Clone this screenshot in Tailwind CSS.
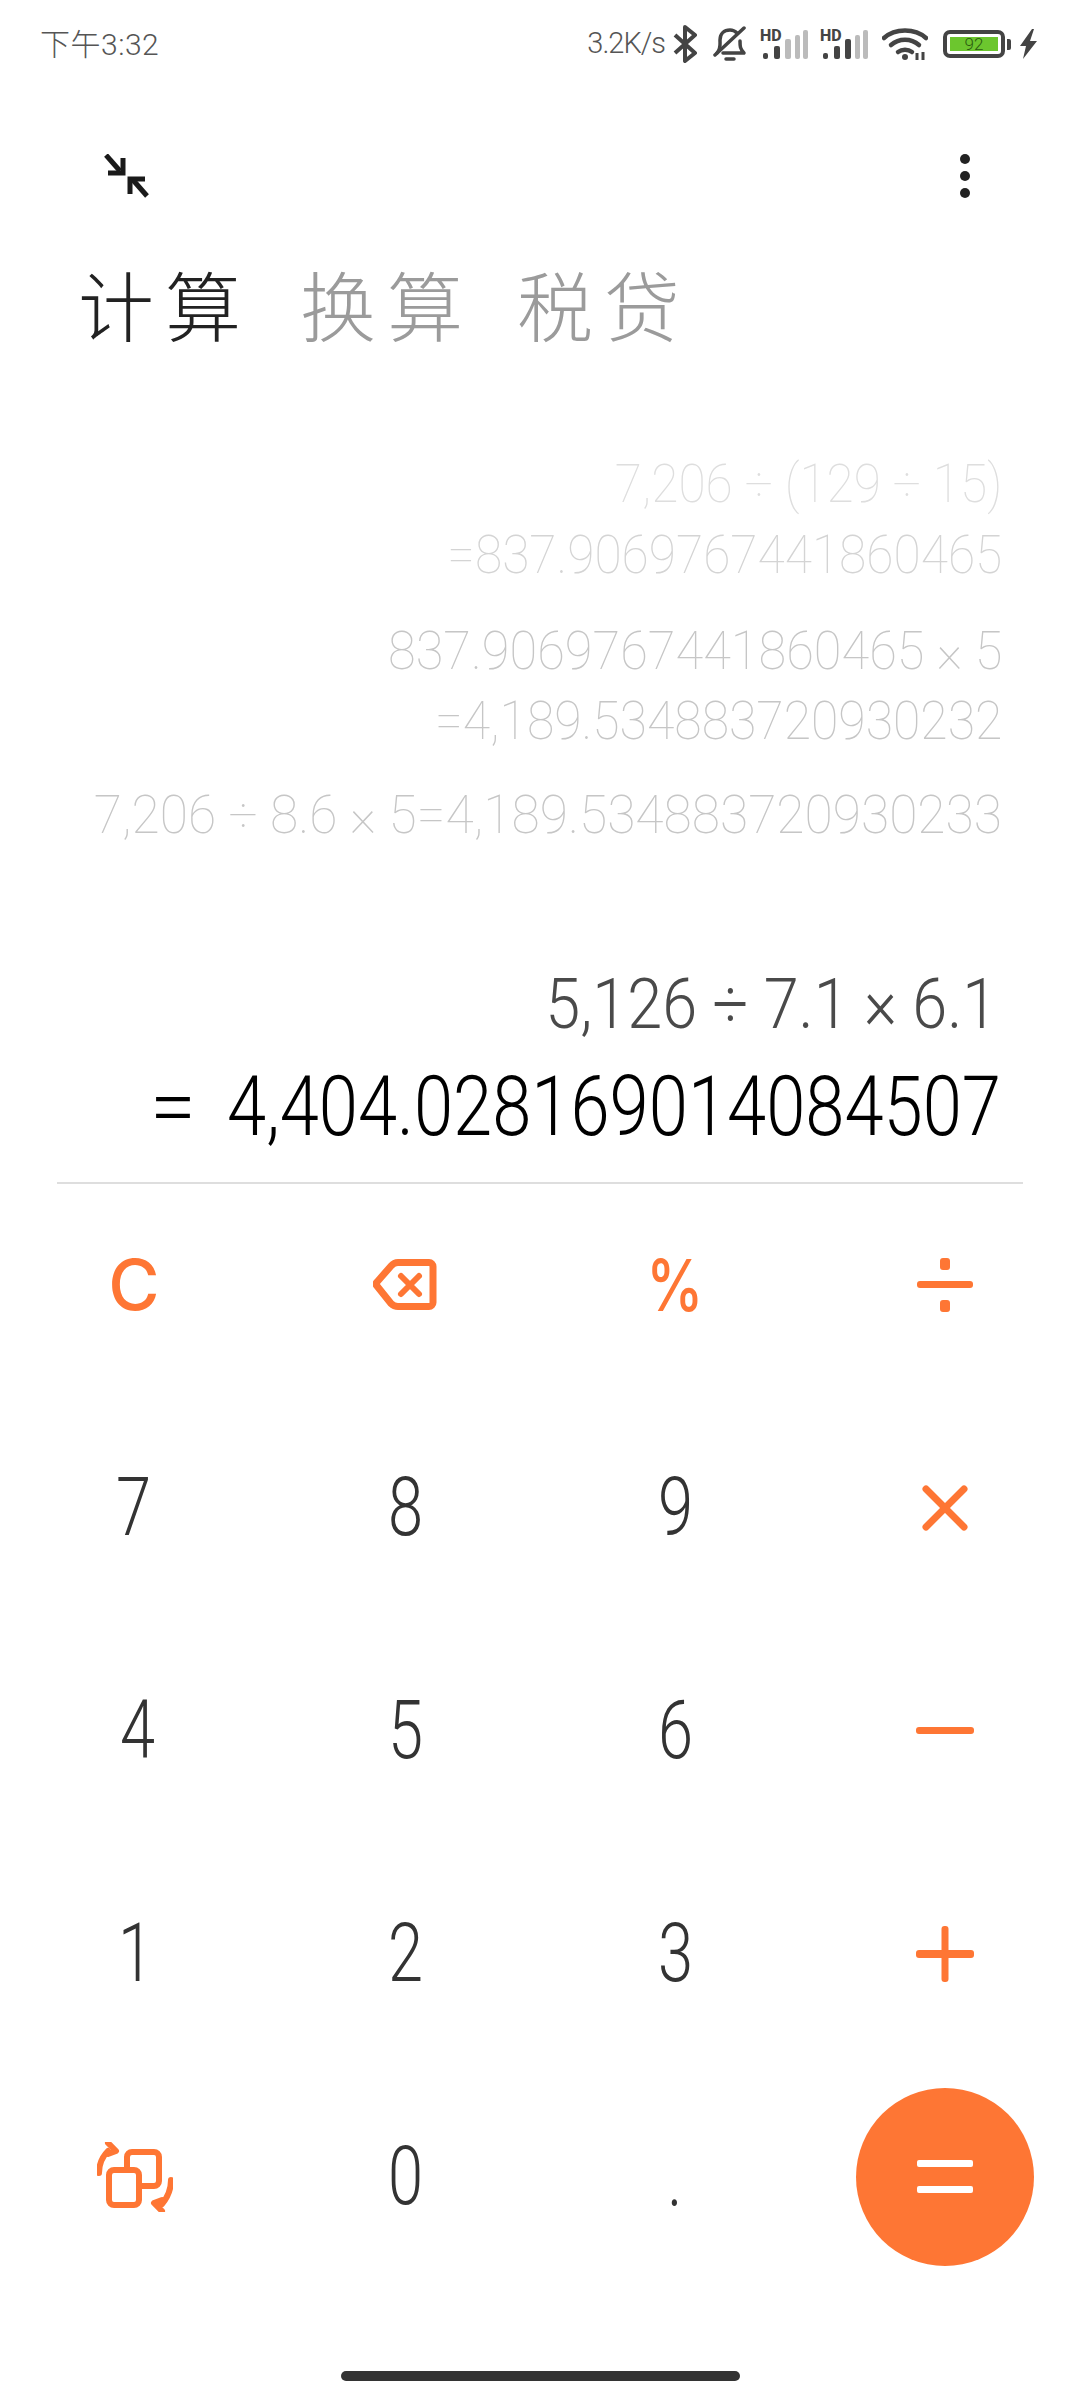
<!DOCTYPE html>
<html lang="zh">
<head>
<meta charset="utf-8">
<script src="https://cdn.jsdelivr.net/npm/@tailwindcss/browser@4"></script>
</head>
<body class="bg-white">
<div class="w-[1080px] h-[2400px] overflow-hidden bg-white font-['Roboto','Noto_Sans_CJK_SC',sans-serif]">

  <!-- status bar -->
  <div class="h-[88px] pl-[40px] pr-[43px] flex items-center text-[#555]">
    <span class="text-[30px] font-light font-['Roboto','Noto_Sans_CJK_SC',sans-serif] tracking-[0.5px]">下午3:32</span>
    <span class="ml-auto text-[29px] font-light tracking-[-1px] mr-[8px] inline-block">3.2K/s</span>
    <svg class="w-[25px] h-[38px] mr-[15px]" viewBox="0 0 25 38" fill="none" stroke="#444" stroke-width="4" stroke-linejoin="round"><path d="M2 10l20 18-10 8V2l10 8L2 28"/></svg>
    <svg class="w-[34px] h-[36px] mr-[13px]" viewBox="0 0 34 36" fill="none" stroke="#444" stroke-width="3.5" stroke-linecap="round" stroke-linejoin="round"><path d="M4 27c4-4 3-8 3-13 0-6 4-10 10-10 3 0 5 1 7 3M27 15c0 5 0 8 4 12H10"/><path d="M2 29L31 2"/><path d="M13 33h8"/></svg>
    <div class="relative w-[48px] h-[30px] mr-[12px]">
      <span class="absolute left-0 top-0 text-[16px] leading-[13px] font-extrabold text-[#444]">HD</span>
      <svg class="w-[48px] h-[30px]" viewBox="0 0 48 30"><rect x="3" y="24" width="5" height="6" rx="2" fill="#444"/><rect x="14" y="17" width="6" height="13" rx="2" fill="#444"/><rect x="25" y="10" width="6" height="20" rx="2" fill="#bbb"/><rect x="35" y="6" width="5" height="24" rx="2" fill="#bbb"/><rect x="43" y="1" width="5" height="29" rx="2" fill="#bbb"/></svg>
    </div>
    <div class="relative w-[48px] h-[30px] mr-[14px]">
      <span class="absolute left-0 top-0 text-[16px] leading-[13px] font-extrabold text-[#444]">HD</span>
      <svg class="w-[48px] h-[30px]" viewBox="0 0 48 30"><rect x="3" y="24" width="5" height="6" rx="2" fill="#444"/><rect x="14" y="17" width="6" height="13" rx="2" fill="#444"/><rect x="25" y="10" width="6" height="20" rx="2" fill="#444"/><rect x="35" y="6" width="5" height="24" rx="2" fill="#bbb"/><rect x="43" y="1" width="5" height="29" rx="2" fill="#bbb"/></svg>
    </div>
    <svg class="w-[46px] h-[34px] mr-[15px]" viewBox="0 0 46 34" fill="none" stroke="#444" stroke-width="4.5" stroke-linecap="round"><path d="M2 11c11-10 31-10 42 0"/><path d="M9 18c8-7 20-7 28 0"/><path d="M16 25c4-3 10-3 14 0"/><circle cx="23" cy="30" r="3" fill="#444" stroke="none"/><path d="M35 26v7M41 25v8" stroke-width="3" stroke-linecap="butt"/></svg>
    <div class="w-[69px] h-[28px] flex items-center mr-[8px]">
      <div class="w-[62px] h-[28px] rounded-[7px] border-[4px] border-[#444] p-[3px] flex">
        <div class="w-full bg-[#6cc62e] flex items-center justify-center text-[17px] leading-none text-[#2a5a10] font-light">92</div>
      </div>
      <div class="ml-[2px] w-[4px] h-[11px] rounded-r-[2px] bg-[#444]"></div>
    </div>
    <svg class="w-[17px] h-[30px]" viewBox="0 0 17 30" fill="#444"><path d="M12 0L0 17h6l-3 13 14-18h-7l4-12z"/></svg>
  </div>

  <!-- toolbar -->
  <div class="mt-[44px] h-[88px] pl-[104px] pr-[110px] flex items-center justify-between">
    <svg class="w-[45px] h-[44px]" viewBox="0 0 45 44" fill="none" stroke="#1a1a1a" stroke-width="5"><path d="M2 1l14 16" /><path d="M19 4v15H4" stroke-width="5"/><path d="M43 42L29 26"/><path d="M26 40V25h15"/></svg>
    <svg class="w-[12px] h-[44px] mr-[-1px]" viewBox="0 0 12 44" fill="#222"><circle cx="6" cy="5" r="5"/><circle cx="6" cy="22" r="5"/><circle cx="6" cy="39" r="5"/></svg>
  </div>

  <!-- tabs -->
  <div class="mt-[38px] h-[90px] pl-[78px] flex items-center text-[76px] leading-none font-light font-['Noto_Sans_CJK_SC',sans-serif] tracking-[11px] text-[#9b9b9b]">
    <span class="w-[222px] text-[#222]">计算</span>
    <span class="w-[217px]">换算</span>
    <span>税贷</span>
  </div>

  <!-- history -->
  <div class="mt-[100px] pr-[78px] flex flex-col items-end text-[54px] leading-none font-thin text-[#c6c6c6]">
    <div class="h-[72px] flex items-center text-[#dedede]"><span class="inline-block whitespace-nowrap origin-right scale-x-[.92]">7,206 ÷ (129 ÷ 15)</span></div>
    <div class="h-[70px] flex items-center text-[#d4d4d4]"><span class="inline-block whitespace-nowrap origin-right scale-x-[.92]">=837.9069767441860465</span></div>
    <div class="h-[26px]"></div>
    <div class="h-[70px] flex items-center"><span class="inline-block whitespace-nowrap origin-right scale-x-[.936]">837.9069767441860465 × 5</span></div>
    <div class="h-[70px] flex items-center"><span class="inline-block whitespace-nowrap origin-right scale-x-[.925]">=4,189.534883720930232</span></div>
    <div class="h-[24px]"></div>
    <div class="h-[70px] flex items-center"><span class="inline-block whitespace-nowrap origin-right scale-x-[.954]">7,206 ÷ 8.6 × 5=4,189.534883720930233</span></div>
  </div>

  <!-- current expression -->
  <div class="mt-[119px] pr-[83px] flex flex-col items-end leading-none">
    <div class="h-[70px] flex items-center text-[70px] font-light text-[#4a4a4a]"><span class="inline-block whitespace-nowrap origin-right scale-x-[.9]">5,126 ÷ 7.1 × 6.1</span></div>
    <div class="mt-[27px] h-[80px] flex items-center text-[83px] font-light text-black">
      <span class="mr-[37px] inline-block w-[40px] text-center">=</span><span class="inline-block whitespace-nowrap origin-left scale-x-[.85] w-[770px]">4,404.028169014084507</span>
    </div>
  </div>

  <div class="mt-[36px] mx-[57px] h-[2px] bg-[#dedede]"></div>

  <!-- keypad -->
  <div class="-mt-[11px] grid grid-cols-4 auto-rows-[223px] text-[81px] font-light leading-none text-[#333]">
    <div class="flex items-center justify-center"><span class="text-[70px] font-medium font-['Inter'] text-[#fe7634] ml-[-2px]">C</span></div>
    <div class="flex items-center justify-center">
      <svg class="w-[64px] h-[51px]" viewBox="0 0 64 51" fill="none" stroke="#fe7634" stroke-width="7" stroke-linecap="round" stroke-linejoin="round"><path d="M25 3.500h31a4 4 0 0 1 4 4v36a4 4 0 0 1-4 4H25q-4 0-7-3L4 27q-2-2 0-4L18 7q3-3.500 7-3.500z"/><path d="M28 17l18 18M46 17L28 35" stroke-width="6"/></svg>
    </div>
    <div class="flex items-center justify-center"><span class="text-[72px] font-medium font-['Inter'] text-[#fe7634] inline-block scale-x-[.8]">%</span></div>
    <div class="flex items-center justify-center">
      <svg class="w-[58px] h-[54px]" viewBox="0 0 58 54" fill="#fe7634"><rect x="24" y="0" width="10" height="12" rx="3"/><rect x="1" y="23" width="56" height="7" rx="3"/><rect x="24" y="42" width="10" height="12" rx="3"/></svg>
    </div>

    <div class="flex items-center justify-center"><span class="inline-block scale-x-[.78] mr-[4px]">7</span></div>
    <div class="flex items-center justify-center"><span class="inline-block scale-x-[.78]">8</span></div>
    <div class="flex items-center justify-center"><span class="inline-block scale-x-[.78]">9</span></div>
    <div class="flex items-center justify-center">
      <svg class="w-[46px] h-[46px]" viewBox="0 0 46 46" fill="none" stroke="#fe7634" stroke-width="7" stroke-linecap="round"><path d="M4 4l38 38M42 4L4 42"/></svg>
    </div>

    <div class="flex items-center justify-center"><span class="inline-block scale-x-[.78] mr-[-4px]">4</span></div>
    <div class="flex items-center justify-center"><span class="inline-block scale-x-[.78]">5</span></div>
    <div class="flex items-center justify-center"><span class="inline-block scale-x-[.78]">6</span></div>
    <div class="flex items-center justify-center">
      <svg class="w-[58px] h-[8px]" viewBox="0 0 58 8" fill="#fe7634"><rect x="0" y="0" width="58" height="7" rx="3"/></svg>
    </div>

    <div class="flex items-center justify-center"><span class="inline-block scale-x-[.78]">1</span></div>
    <div class="flex items-center justify-center"><span class="inline-block scale-x-[.78]">2</span></div>
    <div class="flex items-center justify-center"><span class="inline-block scale-x-[.78]">3</span></div>
    <div class="flex items-center justify-center">
      <svg class="w-[58px] h-[56px]" viewBox="0 0 58 56" fill="#fe7634"><rect x="0" y="24" width="58" height="8" rx="3"/><rect x="25.500" y="0" width="7" height="56" rx="3"/></svg>
    </div>

    <div class="flex items-center justify-center">
      <svg class="w-[76px] h-[70px]" viewBox="0 0 76 70" fill="none" stroke="#fe7634" stroke-width="6" stroke-linecap="round" stroke-linejoin="round"><rect x="30" y="10" width="32" height="34" rx="5"/><rect x="12" y="28" width="30" height="35" rx="5" fill="#fff"/><path d="M2 31C2 22 6 14 11 9"/><path d="M11 1l8 8-8 3"/><path d="M74 38c0 9-4 18-9 24"/><path d="M65 69l-8-8 8-3"/></svg>
    </div>
    <div class="flex items-center justify-center"><span class="inline-block scale-x-[.78]">0</span></div>
    <div class="flex items-center justify-center"><span class="inline-block scale-x-[.78] mt-[4px]">.</span></div>
    <div class="flex items-center justify-center">
      <div class="w-[178px] h-[178px] rounded-full bg-[#fe7634] flex flex-col items-center justify-center gap-[19px]">
        <div class="w-[56px] h-[7px] rounded-[2px] bg-white"></div>
        <div class="w-[56px] h-[7px] rounded-[2px] bg-white"></div>
      </div>
    </div>
  </div>

  <!-- home indicator -->
  <div class="mt-[83px] mx-auto w-[399px] h-[10px] rounded-full bg-[#333]"></div>
</div>
</body>
</html>
